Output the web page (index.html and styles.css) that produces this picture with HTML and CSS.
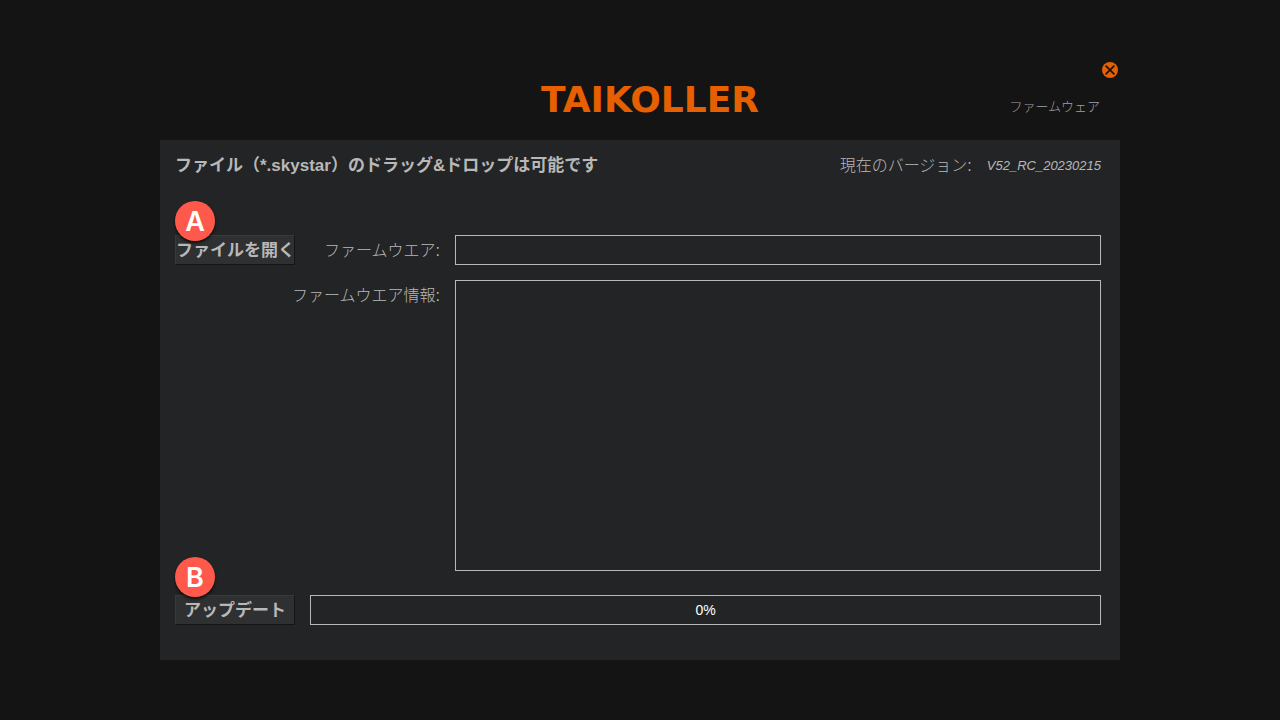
FILE: index.html
```html
<!DOCTYPE html>
<html lang="ja">

<head>
    <meta charset="UTF-8" />
    <meta name="viewport" content="width=device-width, initial-scale=1.0" />
    <title>TAIKOLLER - ファームウェア</title>
    <link rel="stylesheet" href="styles.css">
</head>

<body>
    <div class="window">
        <header class="header">
            <h1 class="logo">TAIKOLLER</h1>
            <div class="header-side">
                <button type="button" class="close" aria-label="閉じる">
                    <svg width="16" height="16" viewBox="0 0 16 16">
                        <circle cx="8" cy="8" r="8" fill="#e65f00" />
                        <path d="M4.1 4.1 L11.9 11.9 M11.9 4.1 L4.1 11.9" stroke="#141414" stroke-width="1.7" stroke-linecap="round" />
                    </svg>
                </button>
                <span class="section">ファームウェア</span>
            </div>
        </header>

        <main class="panel">
            <div class="top-row">
                <h2 class="hint">ファイル（*.skystar）のドラッグ&amp;ドロップは可能です</h2>
                <p class="version">現在のバージョン: <em>V52_RC_20230215</em></p>
            </div>

            <div class="form">
                <div class="action">
                    <span class="badge">A</span>
                    <button type="button" class="btn">ファイルを開く</button>
                </div>
                <label class="label" for="firmware">ファームウエア:</label>
                <input type="text" id="firmware" class="field">

                <label class="label info-label" for="info">ファームウエア情報:</label>
                <textarea id="info" class="field info" readonly></textarea>
            </div>

            <div class="update-row">
                <div class="action">
                    <span class="badge badge-high">B</span>
                    <button type="button" class="btn">アップデート</button>
                </div>
                <div class="progress-box">
                    <progress id="progress" class="progress" value="0" max="100"></progress>
                    <label class="progress-text" for="progress">0%</label>
                </div>
            </div>
        </main>
    </div>
</body>

</html>
```
FILE: styles.css
```css
* {
    box-sizing: border-box;
}

body {
    margin: 0;
    min-height: 100vh;
    display: flex;
    justify-content: center;
    align-items: center;
    background-color: #141414;
    color: #b8b8b8;
    font-family: "Liberation Sans", "Noto Sans CJK JP", sans-serif;
    font-size: 16px;
    line-height: 22px;
}

h1,
h2,
p {
    margin: 0;
}

.window {
    width: 75%;
    min-width: 800px;
}

.header {
    display: grid;
    grid-template-columns: 1fr auto 1fr;
    align-items: center;
    height: 80px;
}

.logo {
    grid-column: 2;
    padding-left: 20px;
    color: #e65f00;
    font-family: "DejaVu Sans", sans-serif;
    font-size: 36px;
    line-height: 40px;
    font-weight: 700;
}

.header-side {
    display: flex;
    flex-direction: column;
    align-items: flex-end;
    gap: 18px;
    height: 80px;
    padding: 2px 2px 0 0;
}

.close {
    display: flex;
    padding: 0;
    border: none;
    background: none;
    cursor: pointer;
}

.section {
    padding-right: 18px;
    font-size: 13px;
    font-weight: 300;
    color: #a0a0a0;
}

.panel {
    padding: 15px 19px 35px 15px;
    background-color: #232426;
}

.top-row {
    display: flex;
    justify-content: space-between;
}

.hint {
    font-size: 17px;
    line-height: 22px;
    font-weight: 700;
}

.version {
    display: flex;
    gap: 15px;
    font-weight: 300;
}

.version em {
    font-size: 13px;
    font-weight: 400;
}

.form {
    display: grid;
    grid-template-columns: 120px 130px 1fr;
    gap: 15px;
    margin-top: 58px;
}

.action {
    position: relative;
}

.badge {
    position: absolute;
    top: -34px;
    left: 0;
    width: 40px;
    height: 40px;
    border-radius: 50%;
    background-color: #ff594c;
    box-shadow: 0 2px 3px rgba(0, 0, 0, 0.7);
    color: white;
    font-family: "Inter", sans-serif;
    font-size: 27px;
    line-height: 42px;
    font-weight: 600;
    text-align: center;
}

.badge-high {
    top: -38px;
}

.btn {
    display: block;
    width: 120px;
    height: 30px;
    padding: 2px 0 0;
    border: 1px solid;
    border-color: #38393a #141414 #141414 #38393a;
    background-color: #2f3032;
    color: #b8b8b8;
    font-family: inherit;
    font-size: 17px;
    line-height: 22px;
    font-weight: 700;
    white-space: nowrap;
    cursor: pointer;
}

.label {
    padding-top: 5px;
    font-weight: 300;
    text-align: right;
    white-space: nowrap;
}

.info-label {
    grid-column: 1 / 3;
}

.field {
    width: 100%;
    height: 30px;
    padding: 4px 8px;
    border: 1px solid #b8b8b8;
    border-radius: 0;
    background-color: transparent;
    color: #b8b8b8;
    font: inherit;
}

.info {
    display: block;
    height: 291px;
    resize: none;
}

.update-row {
    display: grid;
    grid-template-columns: 120px 1fr;
    gap: 15px;
    margin-top: 24px;
}

.progress-box {
    display: grid;
    height: 30px;
    border: 1px solid #b8b8b8;
}

.progress,
.progress-text {
    grid-area: 1 / 1;
}

.progress {
    appearance: none;
    width: 100%;
    height: 28px;
    border: none;
    background: transparent;
}

.progress::-webkit-progress-bar {
    background: transparent;
}

.progress::-webkit-progress-value {
    background: #e65f00;
}

.progress-text {
    z-index: 1;
    color: white;
    font-size: 14px;
    line-height: 28px;
    text-align: center;
}
```
